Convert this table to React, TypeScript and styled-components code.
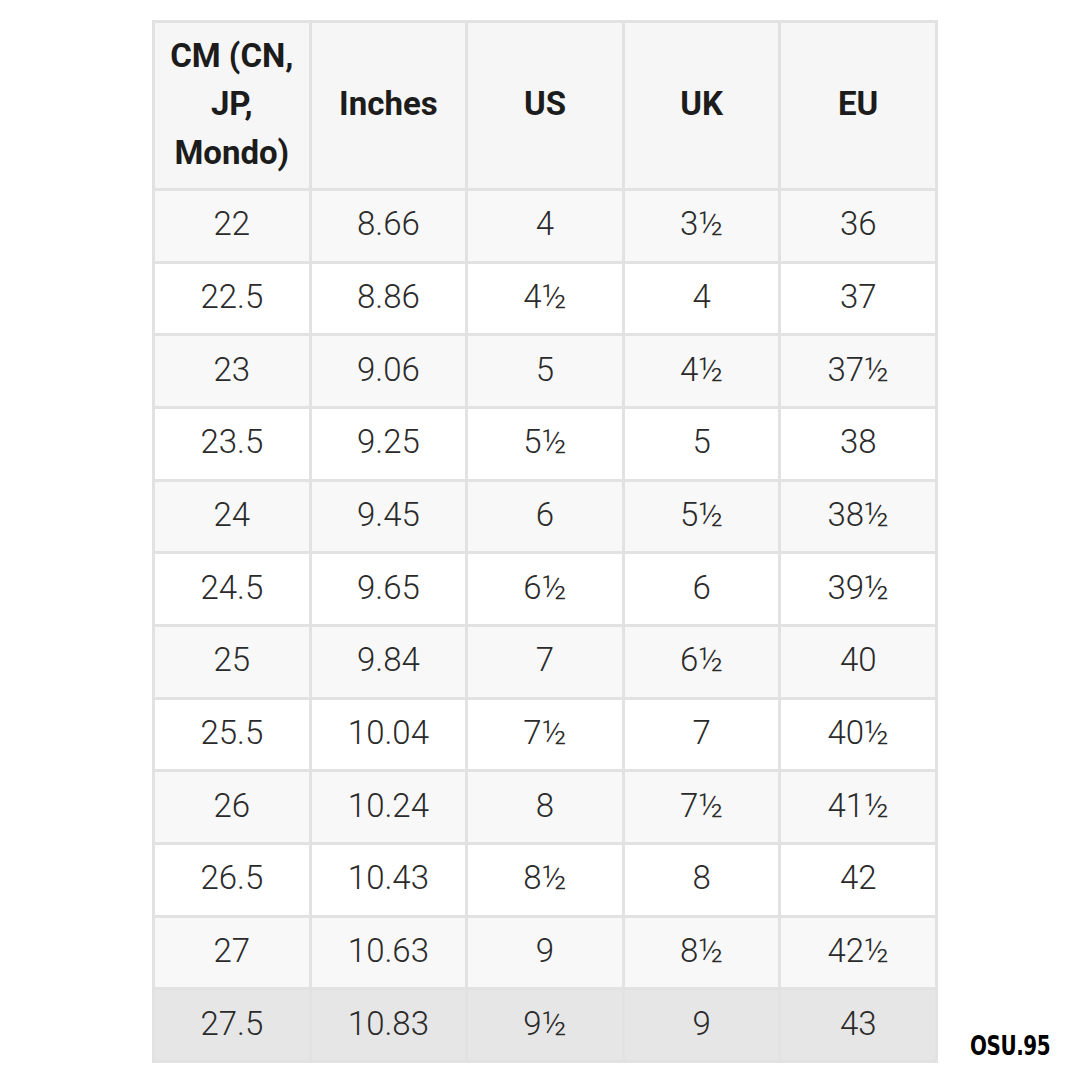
import React from "react";
import styled, { createGlobalStyle } from "styled-components";

const Global = createGlobalStyle`
  html, body { margin: 0; padding: 0; background: #ffffff; }
  body { width: 1080px; height: 1080px; overflow: hidden; font-family: Roboto, "Liberation Sans", sans-serif; }
`;

const Page = styled.div`
  position: relative;
  width: 1080px;
  height: 1080px;
  padding: 20px 0 0 152px;
  box-sizing: border-box;
`;

const Grid = styled.div`
  display: grid;
  width: 786px;
  grid-template-columns: repeat(5, 1fr);
  grid-template-rows: 165px repeat(12, 69.67px);
  gap: 3px;
  padding: 3px;
  box-sizing: border-box;
  background: #e2e2e2;
`;

const Row = styled.div`
  display: contents;
`;

type Tone = "head" | "alt" | "plain" | "hi";

const tones: Record<Tone, string> = {
  head: "#f6f6f6",
  alt: "#f8f8f8",
  plain: "#ffffff",
  hi: "#e6e6e6",
};

const Cell = styled.div<{ $tone: Tone }>`
  display: flex;
  align-items: center;
  justify-content: center;
  text-align: center;
  padding-bottom: 4px;
  box-sizing: border-box;
  background: ${(p) => tones[p.$tone]};
  font-size: 33px;
  color: #2a2a2a;
  font-weight: 300;
`;

const HeadCell = styled(Cell)`
  font-weight: 700;
  color: #1c1c1c;
  line-height: 48.5px;
  padding: 0 8px 2px;
`;

const Mark = styled.div`
  position: absolute;
  left: 970px;
  top: 1030px;
  font-family: "Liberation Sans Narrow", "DejaVu Sans Condensed", "Liberation Sans", sans-serif;
  font-weight: 700;
  font-size: 27px;
  letter-spacing: -0.5px;
  color: #000000;
  transform: scaleX(0.82);
  transform-origin: left top;
`;

const headers = ["CM (CN, JP, Mondo)", "Inches", "US", "UK", "EU"];

const rows: string[][] = [
  ["22", "8.66", "4", "3½", "36"],
  ["22.5", "8.86", "4½", "4", "37"],
  ["23", "9.06", "5", "4½", "37½"],
  ["23.5", "9.25", "5½", "5", "38"],
  ["24", "9.45", "6", "5½", "38½"],
  ["24.5", "9.65", "6½", "6", "39½"],
  ["25", "9.84", "7", "6½", "40"],
  ["25.5", "10.04", "7½", "7", "40½"],
  ["26", "10.24", "8", "7½", "41½"],
  ["26.5", "10.43", "8½", "8", "42"],
  ["27", "10.63", "9", "8½", "42½"],
  ["27.5", "10.83", "9½", "9", "43"],
];

export default function App() {
  return (
    <>
      <Global />
      <Page>
        <Grid>
          <Row>
            {headers.map((h) => (
              <HeadCell key={h} $tone="head">
                {h}
              </HeadCell>
            ))}
          </Row>
          {rows.map((r, i) => {
            const tone: Tone = i === rows.length - 1 ? "hi" : i % 2 === 0 ? "alt" : "plain";
            return (
              <Row key={r[0]}>
                {r.map((v, j) => (
                  <Cell key={j} $tone={tone}>
                    {v}
                  </Cell>
                ))}
              </Row>
            );
          })}
        </Grid>
        <Mark>OSU.95</Mark>
      </Page>
    </>
  );
}
